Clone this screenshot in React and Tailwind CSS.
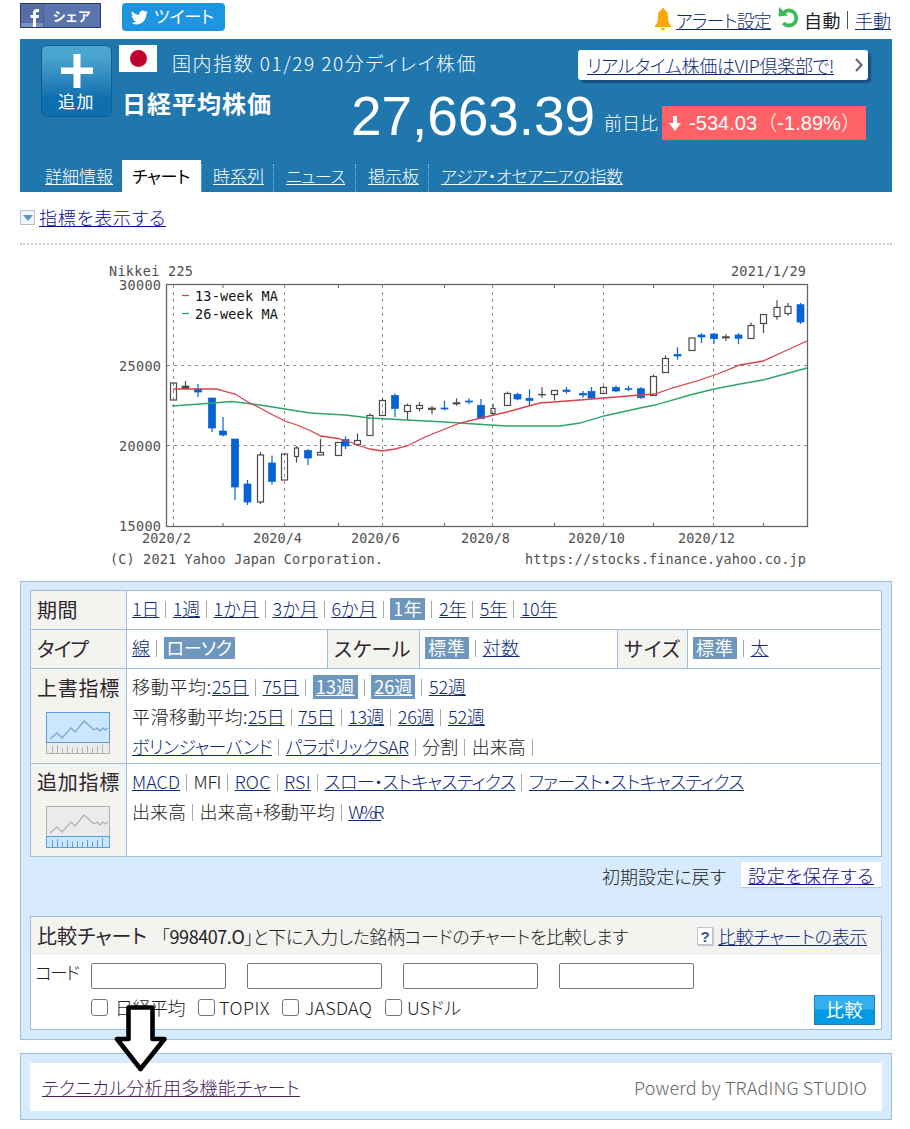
import React, { useLayoutEffect, useRef, useState } from "react";

const candles = [
  // x, high, top, bottom, low, type
  [173.5, 383, 383, 400, 400, "up"],
  [185.5, 381, 386, 388.5, 389, "flat"],
  [198, 384, 389, 392, 397, "down"],
  [212, 398, 398, 428, 432, "down"],
  [223, 417, 431, 435, 436.5, "down"],
  [235, 439, 439, 487, 500, "down"],
  [247.5, 480, 484, 502, 505, "down"],
  [260.5, 452, 455, 502, 504, "up"],
  [272, 455.5, 463, 481.5, 484.5, "down"],
  [284.5, 454, 454, 480, 480, "up"],
  [296.5, 446, 448, 456.5, 462.5, "thin"],
  [308, 449, 450.5, 458, 465, "down"],
  [320.5, 439, 452.5, 455, 455, "up"],
  [338.5, 442.5, 442.5, 455.5, 455.5, "up"],
  [345.5, 436.5, 439.5, 446, 449, "down"],
  [357.5, 433.5, 440.5, 444.5, 446, "up"],
  [370, 413.5, 415.5, 435.5, 435.5, "up"],
  [382.5, 398.5, 400.5, 415.5, 415.5, "up"],
  [395, 393.5, 395.5, 408.5, 417, "down"],
  [407.5, 403.5, 405.5, 411.5, 420.5, "up"],
  [419.5, 402, 405.5, 408.5, 411.5, "up"],
  [432, 406, 408, 409.7, 414.3, "flat"],
  [444.5, 400.7, 408, 409, 410.3, "down"],
  [456.5, 398.3, 402.7, 404, 405.7, "flat"],
  [469, 398.3, 401, 402, 404.3, "down"],
  [481, 399, 405.3, 418.7, 418.7, "down"],
  [493, 403.7, 408.5, 413.5, 415.7, "thin"],
  [507.5, 391.5, 393.5, 405.5, 405.5, "up"],
  [517.5, 392.7, 394.3, 399, 400.3, "down"],
  [529.5, 389.3, 398.3, 400.5, 405.7, "down"],
  [542, 387.3, 394.3, 395, 397.7, "flat"],
  [554.5, 390.5, 390.5, 394.5, 400.5, "up"],
  [566.5, 387, 390, 391.5, 393.7, "down"],
  [583, 391, 393.3, 395, 397.7, "down"],
  [591.5, 387, 391.3, 398, 399.3, "down"],
  [603.5, 386, 387.5, 393.5, 393.5, "up"],
  [616, 385.3, 387.3, 391, 392.3, "down"],
  [628.5, 385.7, 388.7, 389.5, 391, "down"],
  [641, 387, 388.7, 397.7, 399, "down"],
  [653.5, 374.5, 376.5, 395.5, 395.5, "up"],
  [665.5, 355.5, 358.5, 372.5, 372.5, "up"],
  [677.5, 347.3, 354.3, 356, 359.7, "down"],
  [692, 338, 338, 350.5, 350.5, "up"],
  [701.5, 333.3, 335, 337, 343, "down"],
  [714, 333, 334, 338.7, 343.7, "down"],
  [726, 334.3, 336.7, 338, 341, "flat"],
  [738.5, 333, 335, 338.3, 344.3, "down"],
  [751, 322.5, 325.5, 338.5, 338.5, "up"],
  [763.5, 314.5, 314.5, 323.5, 333, "up"],
  [777, 300.3, 307.5, 316.5, 319.7, "up"],
  [788, 303, 306.5, 313.5, 315.7, "up"],
  [800.5, 303, 304.7, 322, 324, "down"],
];

const ma13 =
  "173,389 217,389 224,391 235,394 248,402 260,408 273,415 285,421 297,425 309,430 321,436 338,438.5 350,442 360,446 370,449 382,451 395,449 407,446 419,440 425,437 445,429 460,423 481,418 507,412 525,407 540,403 580,400 604,398 640,395 655,394 672,388 700,380 720,373 740,365 763,361 785,351 807,341";
const ma26 =
  "172,406 200,404 232,401.5 260,405 285,409 310,413 345,415 370,418 407,420 445,422 490,425 507,426 560,426 580,423 604,416 640,408 655,405 690,395 714,389 740,384 763,380 785,374 807,368";

const yLabels = [["30000", 290], ["25000", 371], ["20000", 451], ["15000", 531]];
const xLabels = [
  ["2020/2", 142, 49],
  ["2020/4", 253, 49],
  ["2020/6", 351, 49],
  ["2020/8", 461, 49],
  ["2020/10", 568, 57],
  ["2020/12", 678, 57],
];

const periods = [["1日", 27.2], ["1週", 27.2], ["1か月", 45.3], ["3か月", 45.3], ["6か月", 45.3], ["1年", 35.2, "on"], ["2年", 27.2], ["5年", 27.2], ["10年", 36.5]];
const types = [["線", 18], ["ローソク", 71, "on"]];
const scales = [["標準", 44, "on"], ["対数", 37]];
const sizes = [["標準", 44, "on"], ["太", 18]];
const averages = [["25日", 37], ["75日", 36.5], ["13週", 45, "onLink"], ["26週", 44, "onLink"], ["52週", 37]];
const smoothed = [["25日", 36.5], ["75日", 36.5], ["13週", 36], ["26週", 36.5], ["52週", 37]];
const bands = [["ボリンジャーバンド", 140], ["パラボリックSAR", 123], ["分割", 36, "text"], ["出来高", 54, "text"]];
const extras = [["MACD", 48], ["MFI", 27.5, "text"], ["ROC", 36], ["RSI", 26.5], ["スロー・ストキャスティクス", 191], ["ファースト・ストキャスティクス", 215]];
const volumes = [["出来高", 54, "text"], ["出来高+移動平均", 135, "text"], ["W%R", 33]];

// Spreads the letters of a label so that it takes up w pixels
const Fit = ({ w, className = "", children }) => {
  const ref = useRef(null);
  const [spacing, setSpacing] = useState(0);

  useLayoutEffect(() => {
    const el = ref.current;
    el.style.letterSpacing = "0px";
    const natural = el.getBoundingClientRect().width;
    const next = (w - natural) / [...el.textContent].length;
    el.style.letterSpacing = `${next}px`;
    setSpacing(next);
  }, [w]);

  return (
    <span ref={ref} className={`inline-block shrink-0 whitespace-nowrap ${className}`} style={{ letterSpacing: `${spacing}px` }}>
      {children}
    </span>
  );
};

const underline = "underline decoration-1 underline-offset-1";
const link = "text-[#0d2a78] underline decoration-1 underline-offset-1";

const Sep = () => <span className="ml-1.5 mr-[6.6px] h-[17px] w-px shrink-0 bg-[#a9a9a9]" />;

const Options = ({ items, trailing }) => (
  <>
    {items.map(([label, w, kind], i) => (
      <React.Fragment key={i}>
        {i > 0 && <Sep />}
        {kind === "on" || kind === "onLink" ? (
          <span className={`flex shrink-0 items-center bg-[#6d97bd] px-[3px] font-normal text-white ${kind === "onLink" ? "h-6" : "h-[22px]"}`}>
            <Fit w={w - 6} className={kind === "onLink" ? `pb-[3px] ${underline}` : "pb-[3px]"}>{label}</Fit>
          </span>
        ) : (
          <Fit w={w} className={kind === "text" ? "pb-[3px]" : `pb-[3px] ${link}`}>{label}</Fit>
        )}
      </React.Fragment>
    ))}
    {trailing && <Sep />}
  </>
);

const Candle = ({ data: [x, high, top, bottom, low, type] }) => {
  const color = type === "down" ? "#0563d6" : "#4a4a4a";
  const hollow = type === "up" || type === "thin";
  const half = type === "thin" ? 2 : type === "up" ? 3 : 3.5;
  return (
    <g stroke={color} strokeWidth={1.2}>
      <line x1={x} x2={x} y1={high} y2={top} />
      <line x1={x} x2={x} y1={bottom} y2={low} />
      <rect x={x - half} y={top} width={half * 2} height={Math.max(bottom - top, 0.5)} fill={hollow ? "none" : color} strokeWidth={hollow ? 1.2 : 0.7} />
    </g>
  );
};

const Chart = () => (
  <svg className="ml-20 block h-80 w-[720px]" viewBox="100 255 720 320">
    <g stroke="#8c8c8c" strokeDasharray="3 4">
      {[365.5, 445.5].map((y) => <line key={y} x1="167" x2="807" y1={y} y2={y} />)}
      {[173.5, 284.5, 382.5, 492.5, 603.5, 713.5].map((x) => <line key={x} x1={x} x2={x} y1="285" y2="526" />)}
    </g>
    <g stroke="#666">
      {[223, 338.5, 444.5, 554.5, 653.5, 763.5].map((x) => (
        <path key={x} d={`M${x} 285v3M${x} 526v-3`} />
      ))}
    </g>
    {candles.map((c, i) => <Candle key={i} data={c} />)}
    <polyline points={ma26} fill="none" stroke="#2fa36b" strokeWidth="1.3" />
    <polyline points={ma13} fill="none" stroke="#d8434b" strokeWidth="1.3" />
    <rect x="166.5" y="284.5" width="641" height="242" fill="none" stroke="#666" strokeWidth="1.3" />
    <path d="M182 295.5h7" stroke="#d8434b" strokeWidth="1.3" />
    <path d="M182 313.5h7" stroke="#2fa36b" strokeWidth="1.3" />
    <g className="font-['DejaVu_Sans_Mono',monospace] text-[13.5px]" fill="#505050">
      <text x="109" y="276" textLength="84">Nikkei 225</text>
      <text x="731" y="276" textLength="75">2021/1/29</text>
      <text x="195" y="301" textLength="83" fill="#111">13-week MA</text>
      <text x="195" y="319" textLength="83" fill="#111">26-week MA</text>
      {yLabels.map(([label, y]) => <text key={label} x="119" y={y} textLength="42">{label}</text>)}
      {xLabels.map(([label, x, w]) => <text key={label} x={x} y="543" textLength={w}>{label}</text>)}
      <text x="110" y="564" textLength="273">(C) 2021 Yahoo Japan Corporation.</text>
      <text x="525" y="564" textLength="281">https://stocks.finance.yahoo.co.jp</text>
    </g>
  </svg>
);

const MiniChart = ({ lower }) => {
  const blue = ["#cbe7ff", "#5f9bdc"];
  const gray = ["#ebebeb", "#b0b0b0"];
  const [top, bottom] = lower ? [gray, blue] : [blue, gray];
  return (
    <svg className="ml-[9px] mt-3 block h-[42px] w-16" viewBox="0 0 64 42">
      <rect x="0.5" y="30.5" width="63" height="11" fill={bottom[0]} stroke={bottom[1]} />
      <rect x="0.5" y="0.5" width="63" height="30" fill={top[0]} stroke={top[1]} />
      {lower && <path d="M0 30.5h64" stroke={blue[1]} />}
      <path d="M4 27l7-6 5 5 9-10 4 4 9-11 10 9 3-2 3 3 3-3 2 2 3-2" fill="none" stroke={lower ? "#b4b4b4" : "#7da9cf"} strokeWidth="1.3" />
      <path d="M6.500 34v7M11.500 33v8M16.500 36v5M21.500 34v7M26.500 36v5M31.500 35v6M36.500 36v5M41.500 34v7M46.500 36v5M51.500 34v7M56.500 32v9" stroke={bottom[1]} />
    </svg>
  );
};

const TopBar = () => (
  <div className="flex h-[39px] pt-[3px]">
    <div className="flex h-[25px] w-[81px] items-center border border-[#28396b] bg-[#5c74ad]">
      <svg className="h-[23px] w-[23px] shrink-0" viewBox="0 0 23 23">
        <path d="M0 0h23v23H0z" fill="#566ca5" />
        <path d="M0 19h23v4H0z" fill="#7d91c1" />
        <path d="M22.500 0v23" stroke="#4a5f98" />
        <path d="M12 23v-9H9.500v-3H12V9c0-3 1.500-4.500 6-4v3c-2.500-.2-3 .2-3 1.500V11h3l-.5 3H15v9z" fill="#fff" />
      </svg>
      <Fit w={38} className="ml-[9px] text-[13px] font-bold leading-none text-white">シェア</Fit>
    </div>
    <div className="ml-[21px] flex h-7 w-[103px] items-center rounded bg-[#1d95e0] pl-[9px]">
      <svg className="h-[17px] w-[17px]" viewBox="0 0 24 24" fill="#fff">
        <path d="M23.950 4.570a10 10 0 0 1-2.820.78 4.960 4.960 0 0 0 2.160-2.720 9.900 9.900 0 0 1-3.130 1.190 4.920 4.920 0 0 0-8.380 4.480A13.900 13.900 0 0 1 1.640 3.160a4.920 4.920 0 0 0 1.520 6.570 4.900 4.900 0 0 1-2.230-.61v.06a4.920 4.920 0 0 0 3.950 4.830 5 5 0 0 1-2.210.08 4.940 4.940 0 0 0 4.600 3.420A9.870 9.870 0 0 1 0 19.540a14 14 0 0 0 7.550 2.210c9.050 0 14-7.500 14-13.980 0-.21 0-.42-.02-.63a9.900 9.900 0 0 0 2.420-2.570z" />
      </svg>
      <Fit w={60} className="ml-1.5 -mt-[3px] text-[17px] font-normal leading-none text-white">ツイート</Fit>
    </div>
    <div className="ml-auto flex h-[33px] items-center text-[18px]">
      <svg className="h-[23px] w-4 shrink-0" viewBox="0 0 16 23" fill="#fba70d">
        <path d="M8 0c1 0 1.500.8 1.500 2C12 2.800 13 5 13 8c0 5 .5 7.500 3 9.500V19H0v-1.500C2.500 15.500 3 13 3 8c0-3 1-5.200 3.500-6C6.500.8 7 0 8 0zM6 20h4c0 1.500-.8 2.500-2 2.500S6 21.500 6 20z" />
      </svg>
      <Fit w={95} className={`ml-[5px] ${link}`}>アラート設定</Fit>
      <svg className="mb-1 ml-[7px] h-[21px] w-[21px] shrink-0" viewBox="0 0 21 21">
        <path d="M6 5.500C8.500 3 13 2.500 16 5.500c3.200 3.200 3 8 .2 10.800-3 3-8 3-11-.3" fill="none" stroke="#3cb95a" strokeWidth="3.800" />
        <path d="M1 0l-.5 9.500L10 8.500z" fill="#3cb95a" />
      </svg>
      <Fit w={37} className="ml-[5px] font-normal text-[#222]">自動</Fit>
      <span className="ml-1.5 h-[18px] w-px bg-[#555]" />
      <Fit w={36} className={`ml-[7px] mr-px ${link}`}>手動</Fit>
    </div>
  </div>
);

const Tab = ({ w, box, children }) => (
  <div className={`flex h-7 items-center border-l border-dotted border-[#8db9d6] pb-1 ${box}`}>
    <Fit w={w} className={underline}>{children}</Fit>
  </div>
);

const Header = () => (
  <div className="flex h-[153px] flex-col bg-[#2077ae] text-white">
    <div className="flex h-[121px] pt-1.5">
      <div className="ml-[21px] flex h-[72px] w-[71px] shrink-0 flex-col items-center rounded-md border border-[#155c8e] bg-linear-to-b from-[#4aa5cf] from-15% to-[#0f6fae] to-75% pt-2">
        <svg className="h-[34px] w-8" viewBox="0 0 32 34">
          <path d="M12.500 0h7v13.500H32v6.500H19.500v14h-7V20H0v-6.500h12.500z" fill="#fff" />
        </svg>
        <Fit w={37} className="mt-1 text-[17px] font-normal leading-none">追加</Fit>
      </div>
      <div className="ml-[7px] flex flex-1 flex-col">
        <div className="flex">
          <div className="flex h-[27px] w-[38px] shrink-0 items-center justify-center bg-white">
            <span className="h-[17px] w-[17px] rounded-full bg-[#c0002c]" />
          </div>
          <Fit w={305} className="ml-[15px] mt-1.5 text-[19px]">国内指数 01/29 20分ディレイ株価</Fit>
          <div className="ml-[101px] mt-[5px] flex h-[30px] w-[290px] items-center rounded-[3px] bg-white pl-[9px] shadow-[3px_3px_2px_#174f80]">
            <Fit w={247} className={`text-[18px] ${link}`}>リアルタイム株価はVIP倶楽部で!</Fit>
            <svg className="ml-[21px] h-3.5 w-2" viewBox="0 0 8 14">
              <path d="M1 1l5.500 6L1 13" fill="none" stroke="#5f6c83" strokeWidth="2.200" />
            </svg>
          </div>
        </div>
        <div className="flex">
          <Fit w={150} className="ml-[3px] mt-[7px] text-[24px] font-bold leading-[32px]">日経平均株価</Fit>
          <Fit w={244} className="ml-[79px] mt-1 font-['Liberation_Sans',sans-serif] text-[55px] leading-[64px]">27,663.39</Fit>
          <Fit w={54} className="ml-[9px] mt-[30px] text-[18px]">前日比</Fit>
          <div className="ml-1 mt-[26px] flex h-[34px] w-[204px] items-center bg-[#ff6266] pl-[7px]">
            <svg className="h-[15px] w-3" viewBox="0 0 12 15">
              <path d="M4 0h4v7h4l-6 8-6-8h4z" fill="#fff" />
            </svg>
            <Fit w={172} className="ml-2 font-['Liberation_Sans','Noto_Sans_CJK_JP',sans-serif] text-[20px] [font-feature-settings:normal]">-534.03（-1.89%）</Fit>
          </div>
        </div>
      </div>
    </div>
    <div className="flex h-8 items-end text-[17px]">
      <div className="flex h-7 w-[102px] items-center pb-1 pl-[25px]">
        <Fit w={68} className={underline}>詳細情報</Fit>
      </div>
      <div className="flex h-8 w-[79px] items-center bg-white pl-2.5 text-black">
        <Fit w={58} className="font-normal">チャート</Fit>
      </div>
      <Tab w={51} box="w-[72px] pl-[11px]">時系列</Tab>
      <Tab w={59} box="w-[82px] pl-3">ニュース</Tab>
      <Tab w={51} box="w-[73px] pl-3">掲示板</Tab>
      <Tab w={182} box="w-[200px] pl-3">アジア・オセアニアの指数</Tab>
    </div>
  </div>
);

const label = "bg-[#f3f3f0] text-[20px] font-normal text-[#30262d]";

const Settings = () => (
  <div className="border border-[#9ebfdc] bg-white">
    <div className="flex h-[38px]">
      <div className={`flex w-[95px] items-center pl-1.5 ${label}`}><Fit w={41}>期間</Fit></div>
      <div className="flex flex-1 items-center border-l border-[#9ebfdc] pb-0.5 pl-[5px]"><Options items={periods} /></div>
    </div>
    <div className="flex h-[39px] border-t border-[#9ebfdc]">
      <div className={`flex w-[95px] items-center pl-1.5 ${label}`}><Fit w={51}>タイプ</Fit></div>
      <div className="flex w-[201px] items-center border-l border-[#9ebfdc] pb-0.5 pl-[5px]"><Options items={types} /></div>
      <div className={`flex w-[92px] items-center border-l border-[#9ebfdc] pl-1.5 ${label}`}><Fit w={77}>スケール</Fit></div>
      <div className="flex w-[198px] items-center border-l border-[#9ebfdc] pb-0.5 pl-[5px]"><Options items={scales} /></div>
      <div className={`flex w-[70px] items-center border-l border-[#9ebfdc] pl-1.5 ${label}`}><Fit w={57}>サイズ</Fit></div>
      <div className="flex flex-1 items-center border-l border-[#9ebfdc] pb-0.5 pl-[5px]"><Options items={sizes} /></div>
    </div>
    <div className="flex h-[95px] border-t border-[#9ebfdc]">
      <div className={`w-[95px] pl-1.5 pt-[7px] ${label}`}>
        <Fit w={83} className="block w-fit">上書指標</Fit>
        <MiniChart />
      </div>
      <div className="flex flex-1 flex-col border-l border-[#9ebfdc] pl-[5px] pt-[3px]">
        <div className="flex h-[30px] items-center"><Fit w={80} className="pb-[3px]">移動平均:</Fit><Options items={averages} /></div>
        <div className="flex h-[30px] items-center"><Fit w={116} className="pb-[3px]">平滑移動平均:</Fit><Options items={smoothed} /></div>
        <div className="flex h-[30px] items-center"><Options items={bands} trailing /></div>
      </div>
    </div>
    <div className="flex h-[93px] border-t border-[#9ebfdc]">
      <div className={`w-[95px] pl-1.5 pt-1.5 ${label}`}>
        <Fit w={83} className="block w-fit">追加指標</Fit>
        <MiniChart lower />
      </div>
      <div className="flex flex-1 flex-col border-l border-[#9ebfdc] pl-[5px] pt-[3px]">
        <div className="flex h-[30px] items-center"><Options items={extras} /></div>
        <div className="flex h-[30px] items-center"><Options items={volumes} /></div>
      </div>
    </div>
  </div>
);

const Check = ({ gap, children }) => (
  <label className={`flex items-center ${gap}`}>
    <input type="checkbox" className="h-[17px] w-[17px] appearance-none rounded-[3px] border border-[#767676] bg-white" />
    {children}
  </label>
);

const Compare = () => (
  <div className="mt-7 h-[114px] border border-[#9ebfdc] bg-white">
    <div className="flex h-[38px] items-center bg-[#f3f3f0] pl-1.5">
      <Fit w={110} className="text-[20px] font-normal text-[#30262d]">比較チャート</Fit>
      <Fit w={467} className="ml-[14px]">「<span className="font-normal">998407.O</span>」と下に入力した銘柄コードのチャートを比較します</Fit>
      <span className="ml-[69px] flex h-[18px] w-4 items-center justify-center border border-[#b8c6d8] bg-white font-['Liberation_Sans',sans-serif] text-[15px] font-bold leading-none text-[#3c5296] shadow-[1px_1px_1px_#c5ccd4]">?</span>
      <Fit w={149} className={`ml-[5px] ${link}`}>比較チャートの表示</Fit>
    </div>
    <div className="flex pl-1">
      <Fit w={43} className="mt-1 leading-[26px]">コード</Fit>
      <div className="ml-[13px] mt-2 flex gap-[21px]">
        {[1, 2, 3, 4].map((n) => (
          <input key={n} type="text" className="h-[26px] w-[135px] rounded-[2px] border border-[#767676] bg-white px-1" />
        ))}
      </div>
    </div>
    <div className="flex h-9 items-start pl-[60px]">
      <div className="flex h-[36px] items-center">
        <Check gap=""><Fit w={70} className="ml-[7px]">日経平均</Fit></Check>
        <Check gap="ml-[13px]"><Fit w={51} className="ml-1">TOPIX</Fit></Check>
        <Check gap="ml-3"><Fit w={67} className="ml-1.5">JASDAQ</Fit></Check>
        <Check gap="ml-[13px]"><Fit w={54} className="ml-[5px]">USドル</Fit></Check>
      </div>
      <button className="ml-auto mr-1.5 mt-1.5 flex h-[30px] w-[61px] items-center justify-center border border-[#2680ae] bg-linear-to-b from-[#35b0ee] from-45% to-[#009be5] to-50% pb-0.5 font-normal text-white">
        <Fit w={37}>比較</Fit>
      </button>
    </div>
  </div>
);

export default function App() {
  return (
    <div className="relative h-[1129px] w-[910px] overflow-hidden bg-white pl-5 pr-[18px] font-['Noto_Sans_CJK_JP',sans-serif] text-[18px] font-light leading-6 text-[#222] [font-feature-settings:'palt']">
      <TopBar />
      <Header />
      <div className="flex h-[53px] items-center border-b-2 border-dotted border-[#cfcfcf]">
        <span className="flex h-[15px] w-[15px] items-center justify-center border border-[#b5c3d2] bg-[#f2f6fa]">
          <svg className="h-1.5 w-2.5" viewBox="0 0 10 6"><path d="M0 0h10L5 6z" fill="#5b94bf" /></svg>
        </span>
        <Fit w={127} className={`ml-1 pb-0.5 text-[#0b0b96] ${underline}`}>指標を表示する</Fit>
      </div>
      <div className="mt-[10px]">
        <Chart />
      </div>
      <div className="mt-[6px] h-[459px] border border-[#9ebfdc] bg-[#d8eafd] px-[9px] pt-2">
        <Settings />
        <div className="mt-[5px] flex justify-end">
          <Fit w={124} className="mt-0.5">初期設定に戻す</Fit>
          <div className="ml-[15px] mr-px flex h-[25px] w-[140px] items-center bg-white pl-[7px] shadow-[0_1px_1px_#b5cbe0]">
            <Fit w={126} className={`text-[#0b0b96] ${underline}`}>設定を保存する</Fit>
          </div>
        </div>
        <Compare />
      </div>
      <div className="mt-[13px] h-[67px] border border-[#9ebfdc] bg-[#d8eafd] p-[9px] pb-2">
        <div className="flex h-[48px] items-center justify-between bg-white pl-3 pr-[15px]">
          <Fit w={258} className={`text-[#45205f] ${underline}`}>テクニカル分析用多機能チャート</Fit>
          <Fit w={233} className="text-[#666]">Powerd by TRAdING STUDIO</Fit>
        </div>
      </div>
      <svg className="absolute left-[112px] top-[1003px] h-[72px] w-[58px]" viewBox="112 1003 58 72">
        <path d="M128.500 1007.500h24v31.500h12l-24 30-23.500-30h11.500z" fill="#fff" stroke="#000" strokeWidth="4.600" strokeLinejoin="round" />
      </svg>
    </div>
  );
}
